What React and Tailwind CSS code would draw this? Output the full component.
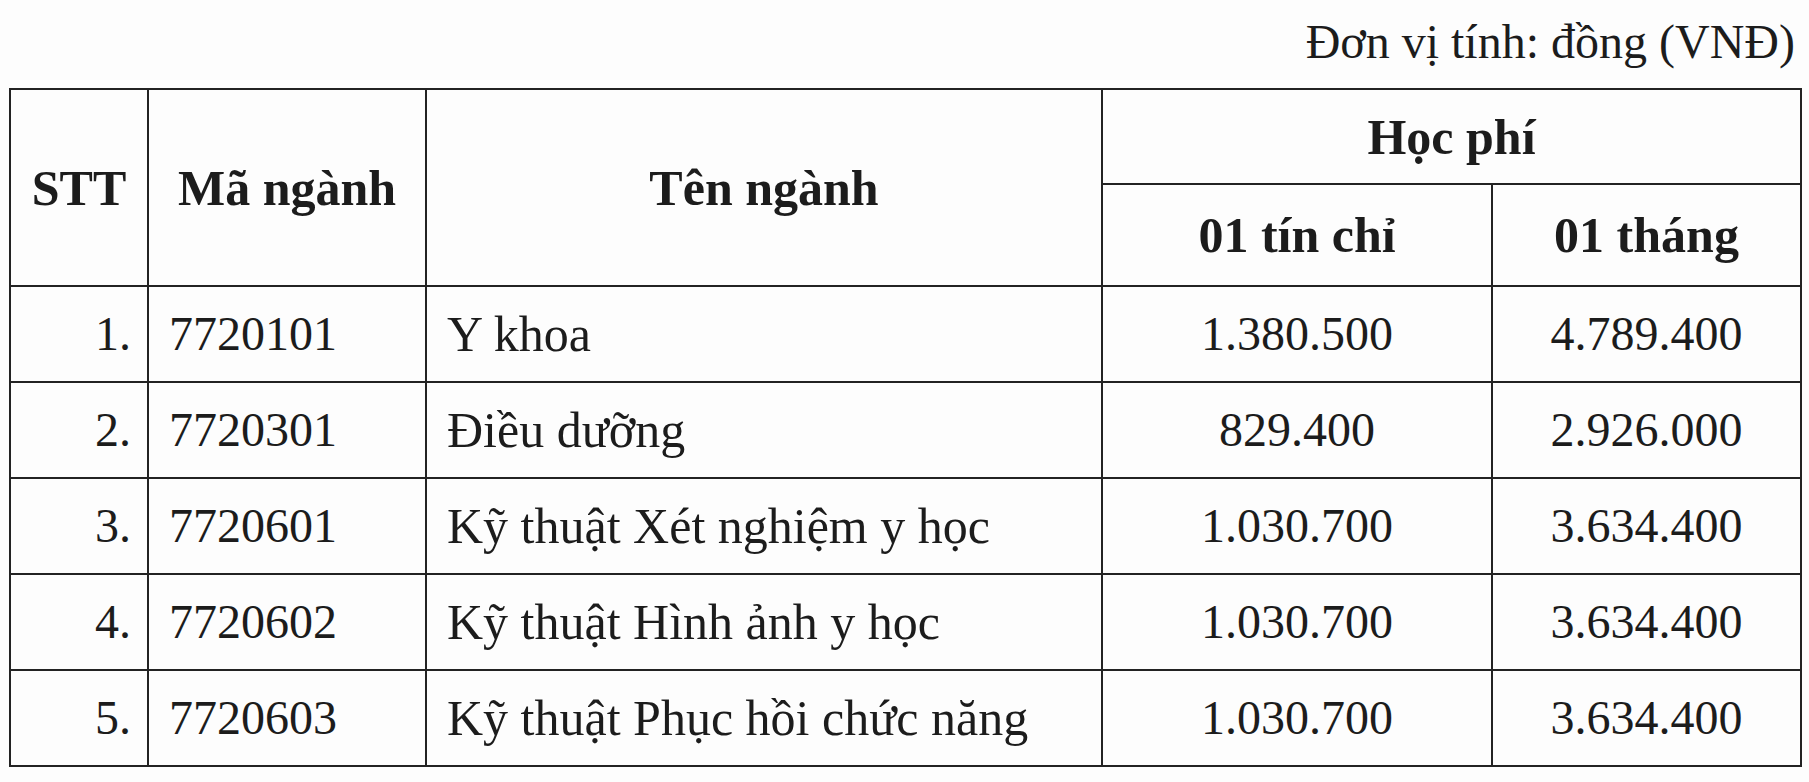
import React from 'react';

const rows = [
  { stt: '1.', code: '7720101', name: 'Y khoa', credit: '1.380.500', month: '4.789.400' },
  { stt: '2.', code: '7720301', name: 'Điều dưỡng', credit: '829.400', month: '2.926.000' },
  { stt: '3.', code: '7720601', name: 'Kỹ thuật Xét nghiệm y học', credit: '1.030.700', month: '3.634.400' },
  { stt: '4.', code: '7720602', name: 'Kỹ thuật Hình ảnh y học', credit: '1.030.700', month: '3.634.400' },
  { stt: '5.', code: '7720603', name: 'Kỹ thuật Phục hồi chức năng', credit: '1.030.700', month: '3.634.400' },
];

const cell = 'border-2 border-[#232323]';

export default function App() {
  return (
    <div className="w-[1809px] h-[782px] bg-[#fdfdfd] text-[#1c1c1c] overflow-hidden" style={{ fontFamily: '"Liberation Serif", "Times New Roman", serif' }}>
      <div className="flex justify-end pr-[14px] pt-[18px] h-[88px] text-[48px] leading-none">
        Đơn vị tính: đồng (VNĐ)
      </div>
      <table className="ml-[9px] w-[1791px] table-fixed border-collapse text-[48px] leading-none">
        <colgroup>
          <col className="w-[138px]" />
          <col className="w-[278px]" />
          <col className="w-[676px]" />
          <col className="w-[390px]" />
          <col className="w-[309px]" />
        </colgroup>
        <thead className="font-bold text-[50px]">
          <tr className="h-[95px]">
            <th rowSpan={2} className={`${cell} text-center`}>STT</th>
            <th rowSpan={2} className={`${cell} text-center`}>Mã ngành</th>
            <th rowSpan={2} className={`${cell} text-center`}>Tên ngành</th>
            <th colSpan={2} className={`${cell} text-center`}>Học phí</th>
          </tr>
          <tr className="h-[102px]">
            <th className={`${cell} text-center`}>01 tín chỉ</th>
            <th className={`${cell} text-center`}>01 tháng</th>
          </tr>
        </thead>
        <tbody>
          {rows.map((r) => (
            <tr key={r.code} className="h-[96px]">
              <td className={`${cell} text-right pr-[16px]`}>{r.stt}</td>
              <td className={`${cell} pl-[20px]`}>{r.code}</td>
              <td className={`${cell} pl-[20px] text-[50px]`}>{r.name}</td>
              <td className={`${cell} text-center`}>{r.credit}</td>
              <td className={`${cell} text-center`}>{r.month}</td>
            </tr>
          ))}
        </tbody>
      </table>
    </div>
  );
}
